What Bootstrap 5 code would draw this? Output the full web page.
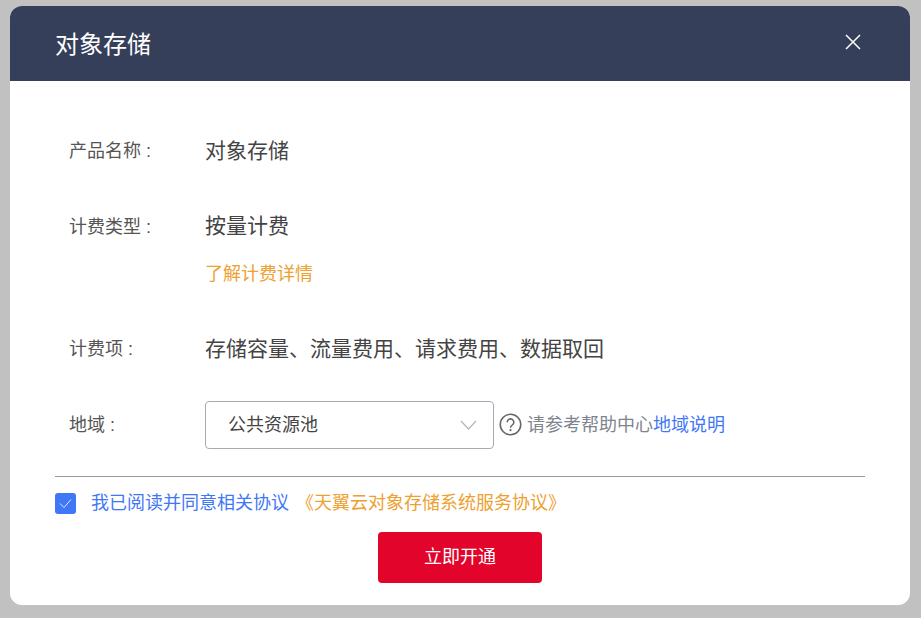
<!DOCTYPE html>
<html lang="zh">
<head>
<meta charset="utf-8">
<title>对象存储</title>
<link href="https://cdn.jsdelivr.net/npm/bootstrap@5.3.0/dist/css/bootstrap.min.css" rel="stylesheet">
<style>
html,body{height:100%;}
body{background:#c1c1c1;font-family:"Liberation Sans","Noto Sans CJK SC",sans-serif;font-size:18px;color:#333;padding:6px 11px 13px 10px;overflow:hidden;}
.dlg{height:599px;width:900px;background:#fff;border-radius:12px;overflow:hidden;}
.dlg-head{height:75px;background:#363f5a;color:#fff;padding:0 49px 0 45px;}
.dlg-title{font-size:24px;line-height:77px;height:75px;margin:0;font-weight:400;}
.dlg-close{background:none;border:0;padding:0;width:16px;height:16px;line-height:0;margin-top:-4px;}
.dlg-body{padding:0 45px;}
.frow{display:flex;align-items:flex-start;}
.flabel{width:150px;padding-left:14px;font-size:18px;color:#555;flex:none;white-space:pre;}
.fval{font-size:21px;color:#444;}
.r1{margin-top:55px;line-height:30px;height:30px;}
.r2{margin-top:45px;line-height:30px;height:30px;}
.r2 .flabel{padding-top:1px;}
.learn{margin:18px 0 0 150px;line-height:30px;color:#eea030;font-size:18px;height:30px;text-decoration:none;display:block;}
.r3{margin-top:45px;line-height:30px;height:30px;}
.r4{margin-top:37px;height:48px;align-items:center;}
.sel{width:289px;height:48px;border:1px solid #a9a9b5;border-radius:4px;padding:0 16px 0 22px;color:#444;}
.hint{color:#80848f;margin-left:5px;gap:5px;}
.hint svg{margin-top:-2px;}
.hint a{color:#3f77f6;text-decoration:none;}
.rule{margin:27px 0 0;border:0;border-top:1px solid #999;opacity:1;height:0;width:810px;}
.agree{margin-top:15px;height:22px;gap:15px;}
.ck{width:21px;height:21px;background:#3f77f6;border-radius:3px;flex:none;}
.ag1{color:#3f77f6;}
.ag2{color:#eea030;margin-left:-8px;text-decoration:none;}
.go{width:164px;height:51px;background:#e2042b;color:#fff;border:0;border-radius:4px;font-size:18px;margin:18px 0 0 323px;display:block;}
</style>
</head>
<body>
<div class="dlg">
  <div class="dlg-head d-flex justify-content-between align-items-center">
    <h1 class="dlg-title">对象存储</h1>
    <button type="button" class="dlg-close" aria-label="关闭"><svg width="16" height="16" viewBox="0 0 16 16"><path d="M1 1L15 15M15 1L1 15" stroke="#fff" stroke-width="1.5" fill="none"/></svg></button>
  </div>
  <div class="dlg-body">
    <div class="frow r1"><div class="flabel">产品名称 :</div><div class="fval">对象存储</div></div>
    <div class="frow r2"><div class="flabel">计费类型 :</div><div class="fval">按量计费</div></div>
    <a class="learn" href="#">了解计费详情</a>
    <div class="frow r3"><div class="flabel">计费项 :</div><div class="fval">存储容量、流量费用、请求费用、数据取回</div></div>
    <div class="frow r4">
      <div class="flabel">地域 :</div>
      <div class="sel d-flex justify-content-between align-items-center"><span>公共资源池</span>
        <svg width="17" height="10" viewBox="0 0 17 10"><path d="M1 1L8.5 9L16 1" stroke="#b4b7bf" stroke-width="1.3" fill="none"/></svg></div>
      <div class="hint d-flex align-items-center">
        <svg width="23" height="23" viewBox="0 0 22 22"><circle cx="11" cy="11" r="9.8" stroke="#666" stroke-width="1.5" fill="none"/><path d="M7.8 8.8a3.2 3.2 0 1 1 4.8 2.8c-1 .6-1.6 1.1-1.6 2.4" stroke="#666" stroke-width="1.5" fill="none"/><circle cx="11" cy="16.4" r="1" fill="#666"/></svg>
        <span>请参考帮助中心<a href="#">地域说明</a></span>
      </div>
    </div>
    <hr class="rule">
    <div class="agree d-flex align-items-center">
      <span class="ck d-flex align-items-center justify-content-center"><svg width="13" height="11" viewBox="0 0 13 11"><path d="M1 5.5L5 9.5L12 1.5" stroke="#dfe8ff" stroke-width="1" fill="none"/></svg></span>
      <span class="ag1">我已阅读并同意相关协议</span><a class="ag2" href="#">《天翼云对象存储系统服务协议》</a>
    </div>
    <button type="button" class="go">立即开通</button>
  </div>
</div>
<script src="https://cdn.jsdelivr.net/npm/bootstrap@5.3.0/dist/js/bootstrap.bundle.min.js"></script>
</body>
</html>
